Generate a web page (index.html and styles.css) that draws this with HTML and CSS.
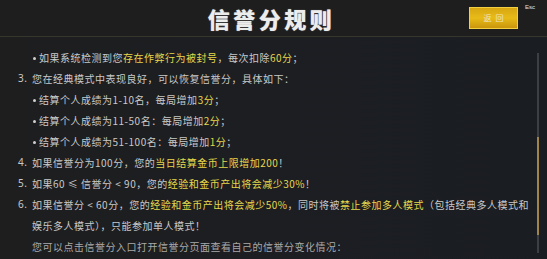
FILE: index.html
```html
<!DOCTYPE html>
<html lang="zh-CN">
<head>
<meta charset="utf-8">
<title>信誉分规则</title>
<link rel="stylesheet" href="styles.css">
</head>
<body>
<div class="screen">
  <header class="top">
    <div class="side"></div>
    <h1 class="title">信誉分规则</h1>
    <div class="side right">
      <button class="back">返回</button>
      <span class="esc">Esc</span>
    </div>
  </header>
  <main class="body">
    <div class="content">
      <div class="row sub"><span class="dot"></span><span class="txt">如果系统检测到您<em>存在作弊行为被封号</em>，每次扣除<em>60分</em>；</span></div>
      <div class="row"><span class="num">3.</span><span class="txt">您在经典模式中表现良好，可以恢复信誉分，具体如下：</span></div>
      <div class="row sub"><span class="dot"></span><span class="txt">结算个人成绩为1-10名，每局增加<em>3分</em>；</span></div>
      <div class="row sub"><span class="dot"></span><span class="txt">结算个人成绩为11-50名：每局增加<em>2分</em>；</span></div>
      <div class="row sub"><span class="dot"></span><span class="txt">结算个人成绩为51-100名：每局增加<em>1分</em>；</span></div>
      <div class="row"><span class="num">4.</span><span class="txt">如果信誉分为100分，您的<em>当日结算金币上限增加200</em>！</span></div>
      <div class="row"><span class="num">5.</span><span class="txt">如果60 ≤ 信誉分 &lt; 90，您的<em>经验和金币产出将会减少30%</em>！</span></div>
      <div class="row"><span class="num">6.</span><span class="txt">如果信誉分 &lt; 60分，您的<em>经验和金币产出将会减少50%</em>，同时将被<em>禁止参加多人模式</em>（包括经典多人模式和<br>娱乐多人模式），只能参加单人模式！</span></div>
      <div class="row faded"><span class="num"></span><span class="txt">您可以点击信誉分入口打开信誉分页面查看自己的信誉分变化情况：</span></div>
    </div>
    <div class="scrollbar"><div class="thumb"></div></div>
  </main>
</div>
</body>
</html>
```
FILE: styles.css
```css
* { box-sizing: border-box; }
html, body { margin: 0; padding: 0; }
body {
  width: 547px;
  height: 259px;
  overflow: hidden;
  background: #1b1d21;
  font-family: "Noto Sans CJK SC", "Noto Sans", sans-serif;
}
.screen {
  width: 547px;
  height: 259px;
  display: flex;
  flex-direction: column;
  background: linear-gradient(90deg, #1e1e1f 0%, #1c1e22 50%, #1a1d22 100%);
}
.top {
  height: 37px;
  flex: none;
  display: grid;
  grid-template-columns: 1fr auto 1fr;
  border-bottom: 1px solid #36362c;
  background: #1f1e1e;
}
.title {
  margin: 0;
  padding-top: 4px;
  padding-right: 4px;
  font-size: 22px;
  line-height: 28px;
  font-weight: 900;
  letter-spacing: 3.5px;
  color: #ececec;
  text-shadow: 0 0 1px #999;
}
.side.right {
  display: flex;
  justify-content: flex-end;
  align-items: flex-start;
}
.back {
  margin-top: 7px;
  width: 49px;
  height: 22px;
  padding: 0;
  border: 1px solid #f2d040;
  background: linear-gradient(180deg, #d7a612 0%, #e8bb18 50%, #c9960c 100%);
  color: #efe2c0;
  font-family: "Noto Sans CJK SC", sans-serif;
  font-size: 8px;
  letter-spacing: 4px;
  text-indent: 4px;
  line-height: 20px;
}
.esc {
  margin-top: 3px;
  margin-left: 7px;
  width: 22px;
  font-family: "Liberation Sans", sans-serif;
  font-size: 6px;
  line-height: 8px;
  color: #e0e0e0;
}
.body {
  flex: 1;
  display: flex;
  min-height: 0;
}
.content {
  flex: 1;
  padding: 10px 0 0 18px;
  color: #c9c9c9;
  font-size: 10px;
  letter-spacing: 0.5px;
}
.row {
  display: flex;
  align-items: flex-start;
  line-height: 21px;
}
.num {
  width: 14px;
  flex: none;
  font-family: "Noto Sans", sans-serif;
}
.row.sub { padding-left: 14px; }
.dot {
  flex: none;
  width: 3px;
  height: 3px;
  border-radius: 50%;
  background: #d0d0d0;
  margin: 10px 3px 0 1px;
}
.txt { white-space: nowrap; }
em {
  font-style: normal;
  color: #e6d84c;
}
.faded { color: #a9a9a9; }
.scrollbar {
  flex: none;
  width: 2px;
  margin: 16px 10px 6px 8px;
  background: #3c3f44;
  display: flex;
  flex-direction: column;
  padding-top: 84px;
  padding-bottom: 18px;
}
.thumb {
  flex: 1;
  background: #a0844a;
}
```
